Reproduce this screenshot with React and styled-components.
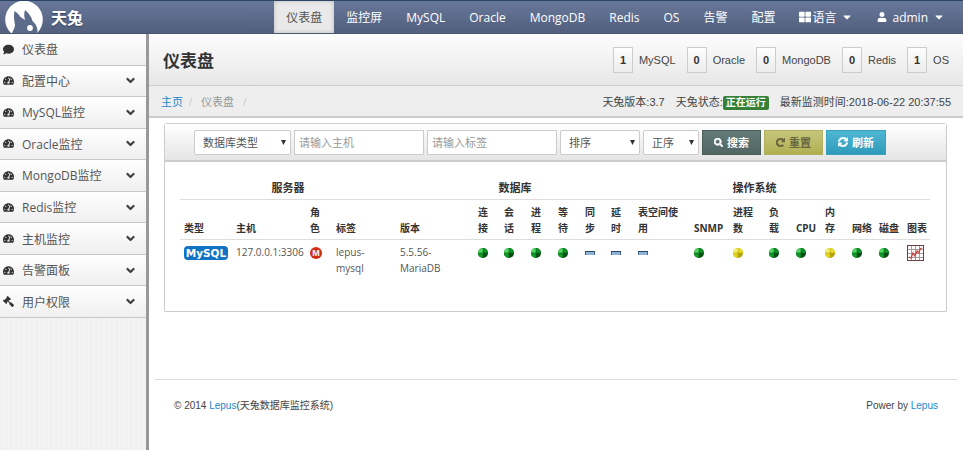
import React from "react";
import styled, {createGlobalStyle} from "styled-components";
import {FaComment, FaTachometerAlt, FaGavel, FaChevronDown, FaUser, FaThLarge, FaCaretDown, FaSearch, FaRedoAlt, FaSyncAlt} from "react-icons/fa";

const GlobalStyle = createGlobalStyle`
    * {
        box-sizing: border-box;
    }

    body {
        margin: 0;
        background: #fff;
        color: #444;
        font-family: "Open Sans", "Noto Sans CJK SC", sans-serif;
        font-size: 12px;
    }

    a {
        color: #1b88cb;
        text-decoration: none;
    }
`

const Page = styled.div`
    min-height: 100vh;
    display: flex;
    flex-direction: column;
`

const TopBar = styled.header`
    height: 34px;
    display: flex;
    justify-content: space-between;
    border-top: 1px solid #2b4664;
    border-bottom: 1px solid #4b5874;
    background: linear-gradient(#68779a, #525f7d);
`

const Brand = styled.a`
    display: flex;
    align-items: center;
    gap: 8px;
    padding-left: 5px;
    color: #fff;
    font-family: "Liberation Serif", "Noto Sans CJK SC", serif;
    font-size: 16px;
    font-weight: bold;
    text-shadow: 0 1px 1px #333e55;
`

const TopNav = styled.nav`
    display: flex;
    padding-right: 6px;
`

const NavLink = styled.a`
    display: flex;
    align-items: center;
    padding: 0 12px;
    color: ${props => props.$active ? "#555" : "#fff"};
    background: ${props => props.$active ? "#e9e9e9" : "none"};
    box-shadow: ${props => props.$active ? "inset 0 0 4px #bbb" : "none"};
`

const NavButton = styled.button`
    display: flex;
    align-items: center;
    gap: ${props => props.$gap}px;
    padding: 0 12px;
    border: 0;
    background: none;
    color: #fff;
    font: inherit;

    .caret {
        margin-left: 4px;
    }
`

const Body = styled.div`
    flex: 1;
    display: flex;
`

const Sidebar = styled.aside`
    width: 149px;
    flex-shrink: 0;
    border-right: 3px solid #999;
    background: repeating-linear-gradient(90deg, #f1f1f1 0 3px, #f3f3f3 3px 5px);
`

const Menu = styled.ul`
    min-height: 284px;
    display: grid;
    grid-auto-rows: 1fr;
    margin: 0;
    padding: 0;
    list-style: none;
`

const MenuItem = styled.li`
    display: flex;
    border-bottom: 1px solid #c8c8c8;
    background: linear-gradient(#fff, #efefef);
`

const MenuLink = styled.a`
    flex: 1;
    display: flex;
    align-items: center;
    padding: 0 11px 0 3px;
    color: #555;

    svg {
        color: #333;
    }

    span {
        flex: 1;
        padding-left: 8px;
    }
`

const Gavel = styled(FaGavel)`
    transform: scaleX(-1);
`

const Main = styled.main`
    flex: 1;
    min-width: 0;
`

const Heading = styled.div`
    height: 52px;
    display: flex;
    align-items: center;
    justify-content: space-between;
    padding: 0 14px;
    border-bottom: 1px solid #ccc;
    background: linear-gradient(#fdfdfd, #e7e7e7);

    h1 {
        margin: 0;
        color: #333;
        font-size: 17px;
    }
`

const Stats = styled.div`
    display: flex;
    gap: 11px;
    font-family: "Liberation Sans", "Noto Sans CJK SC", sans-serif;
`

const Stat = styled.div`
    display: flex;
    align-items: center;
    gap: 6px;
    font-size: 11px;

    b {
        width: 20px;
        height: 26px;
        border: 1px solid #ccc;
        background: linear-gradient(#fdfdfd, #ececec);
        color: #333;
        line-height: 24px;
        text-align: center;
    }
`

const Crumbs = styled.div`
    height: 32px;
    display: flex;
    align-items: center;
    justify-content: space-between;
    padding: 0 12px;
    border-bottom: 2px solid #ccc;
    background: #eee;
    color: #999;
    font-family: "Liberation Sans", "Noto Sans CJK SC", sans-serif;
    font-size: 11px;

    i {
        padding: 0 6px;
        color: #ccc;
        font-style: normal;
    }
`

const Status = styled.div`
    display: flex;
    align-items: center;
    gap: 11px;
    color: #444;

    b {
        padding: 0 3px;
        border-radius: 2px;
        background: #378137;
        color: #fff;
        font-size: 10px;
        line-height: 14px;
        display: inline-block;
    }
`

const Panel = styled.section`
    min-height: 189px;
    margin: 5px 16px 0 15px;
    border: 1px solid #ccc;
    border-radius: 3px 3px 0 0;
`

const Toolbar = styled.form`
    height: 38px;
    display: flex;
    align-items: center;
    gap: 3px;
    padding-left: 29px;
    border-bottom: 2px solid #ccc;
    background: linear-gradient(#fff, #e5e5e5);
`

const Field = styled.input`
    width: 130px;
    height: 25px;
    padding: 0 4px;
    border: 1px solid #ccc;
    background: #fff;
    font: inherit;
    font-size: 11px;

    &::placeholder {
        color: #999;
    }
`

const Picker = styled.div`
    width: ${props => props.$width}px;
    height: 25px;
    display: grid;
    align-items: center;

    select, svg {
        grid-area: 1 / 1;
    }

    select {
        appearance: none;
        width: 100%;
        height: 25px;
        padding: 0 8px;
        border: 1px solid #ccc;
        border-radius: 2px;
        background: #fff;
        color: #555;
        font: inherit;
        font-size: 11px;
    }

    svg {
        justify-self: end;
        margin-right: 5px;
        pointer-events: none;
    }
`

const tones = {
    dark: "background: linear-gradient(#637b78, #526664); border-color: #4d5f5d; color: #fff;",
    olive: "background: linear-gradient(#c6c67c, #b0b052); border-color: #b0b060; color: #666540;",
    blue: "background: linear-gradient(#4fb7d4, #2f9bba); border-color: #39a3c0; color: #fff;",
}

const Button = styled.button`
    height: 25px;
    display: flex;
    align-items: center;
    gap: 4px;
    padding: 0 11px;
    border: 1px solid;
    font: inherit;
    font-size: 11px;
    font-weight: bold;
    ${props => tones[props.$tone]}
`

const Table = styled.table`
    width: calc(100% - 31px);
    margin: 17px 16px 0 15px;
    table-layout: fixed;
    border-collapse: collapse;
    font-size: 10px;
    line-height: 16px;

    th, td {
        padding: 4px 0 3px 4px;
        text-align: left;
        vertical-align: bottom;
        white-space: pre;
    }

    th {
        border-bottom: 1px solid #ddd;
        color: #333;
    }

    td {
        vertical-align: top;
        color: #555;
    }

    td svg {
        display: block;
    }

    th[colspan] {
        padding: 0 0 3px;
        font-size: 11px;
        line-height: 17px;
        text-align: center;
    }
`

const Col = styled.col`
    width: ${props => props.$width / 7.5}%;
`

const IconBox = styled.span`
    height: 17px;
    display: flex;
    align-items: center;
`

const Footer = styled.footer`
    display: flex;
    justify-content: space-between;
    margin: 67px 6px 0;
    padding: 18px 19px;
    border-top: 1px solid #ddd;
    font-family: "Liberation Sans", "Noto Sans CJK SC", sans-serif;
    font-size: 10px;
    line-height: 16px;
`

const links = ["仪表盘", "监控屏", "MySQL", "Oracle", "MongoDB", "Redis", "OS", "告警", "配置"]

const menu = [
    {label: "仪表盘", icon: FaComment, leaf: true},
    {label: "配置中心", icon: FaTachometerAlt},
    {label: "MySQL监控", icon: FaTachometerAlt},
    {label: "Oracle监控", icon: FaTachometerAlt},
    {label: "MongoDB监控", icon: FaTachometerAlt},
    {label: "Redis监控", icon: FaTachometerAlt},
    {label: "主机监控", icon: FaTachometerAlt},
    {label: "告警面板", icon: FaTachometerAlt},
    {label: "用户权限", icon: Gavel},
]

const stats = [["1", "MySQL"], ["0", "Oracle"], ["0", "MongoDB"], ["0", "Redis"], ["1", "OS"]]

const columns = [
    {title: "类型", width: 52, cell: <MySqlBadge />},
    {title: "主机", width: 74, cell: "127.0.0.1:3306"},
    {title: "角\n色", width: 26, cell: <RoleBadge />},
    {title: "标签", width: 64, cell: "lepus-\nmysql"},
    {title: "版本", width: 78, cell: "5.5.56-\nMariaDB"},
    {title: "连\n接", width: 26, cell: <Ball />},
    {title: "会\n话", width: 27, cell: <Ball />},
    {title: "进\n程", width: 27, cell: <Ball />},
    {title: "等\n待", width: 27, cell: <Ball />},
    {title: "同\n步", width: 26, cell: <Dash />},
    {title: "延\n时", width: 27, cell: <Dash />},
    {title: "表空间使\n用", width: 56, cell: <Dash />},
    {title: "SNMP", width: 39, cell: <Ball />},
    {title: "进程\n数", width: 36, cell: <Ball warn />},
    {title: "负\n载", width: 27, cell: <Ball />},
    {title: "CPU", width: 29, cell: <Ball />},
    {title: "内\n存", width: 27, cell: <Ball warn />},
    {title: "网络", width: 27, cell: <Ball />},
    {title: "磁盘", width: 28, cell: <Ball />},
    {title: "图表", width: 27, cell: <ChartIcon />},
]

function Logo() {
    return (
        <svg width="38" height="32" viewBox="0 0 38 32">
            <circle cx="19" cy="18.5" r="18.8" fill="#fff" />
            <path d="M7 32C8 29 10 27 10 24C9 19 8.500 14 9.500 10C12 11.500 14 13.500 15.500 16L20 19C19 15 19 12 20 9C24 12 26.500 16 27.500 20C31 23 33 27 32.500 32Z" fill="#5d6b8b" />
            <circle cx="25" cy="27" r="2.900" fill="#fff" />
        </svg>
    )
}

function MySqlBadge() {
    return (
        <svg width="44" height="14" viewBox="0 0 44 14">
            <rect width="44" height="14" rx="4" fill="#1273c4" />
            <text x="22" y="11" textAnchor="middle" fill="#fff" fontFamily="DejaVu Sans" fontWeight="bold" fontSize="10.5">MySQL</text>
        </svg>
    )
}

function RoleBadge() {
    return (
        <svg width="12" height="12" viewBox="0 0 12 12">
            <circle cx="6" cy="6" r="6" fill="#d42c12" />
            <text x="6" y="9" textAnchor="middle" fill="#fff" fontFamily="Liberation Sans" fontWeight="bold" fontSize="9">M</text>
        </svg>
    )
}

function Ball({warn}) {
    return (
        <svg width="10" height="10" viewBox="0 0 10 10">
            <circle cx="5" cy="5" r="5" fill={warn ? "#b5a20c" : "#084d16"} />
            <path d="M5 5V0A5 5 0 0 0 0 5Z" fill={warn ? "#f5ef6a" : "#4fd860"} />
            <path d="M5 5H0A5 5 0 0 0 5 10Z" fill={warn ? "#e3d520" : "#0f9a28"} />
            <path d="M5 5V0A5 5 0 0 1 10 5Z" fill={warn ? "#e8dc28" : "#109028"} />
            <path d="M5 0V10M0 5H10" stroke={warn ? "#b3a410" : "#0b5e1a"} strokeWidth=".6" />
        </svg>
    )
}

function Dash() {
    return (
        <svg width="10" height="4" viewBox="0 0 10 4">
            <rect width="10" height="4" fill="#8db4d8" />
            <rect width="10" height="1" fill="#2c4560" />
            <rect y="1" width="1" height="3" fill="#46698c" />
            <rect x="9" y="1" width="1" height="3" fill="#46698c" />
        </svg>
    )
}

function ChartIcon() {
    return (
        <svg width="17" height="16" viewBox="0 0 17 16">
            <rect x=".5" y=".5" width="16" height="15" fill="#fff" stroke="#6b4040" />
            <path d="M4.500 1V15M8.500 1V15M12.500 1V15M1 4.500H16M1 8.500H16M1 12.500H16" stroke="#a89a9a" />
            <path d="M2 12L4 13L6 8L8 11L10 6L12 8L13 4L15 3" fill="none" stroke="#c24a44" strokeWidth="1.3" />
        </svg>
    )
}

function Select({label, width}) {
    return (
        <Picker $width={width}>
            <select aria-label={label}>
                <option>{label}</option>
            </select>
            <svg width="5" height="5" viewBox="0 0 5 5">
                <path d="M0 0H5L2.500 5Z" fill="#333" />
            </svg>
        </Picker>
    )
}

export default function App() {

    return (
        <Page>
            <GlobalStyle />

            <TopBar>
                <Brand href="#"><Logo />天兔</Brand>

                <TopNav>
                    {links.map((link, i) => (
                        <NavLink key={link} href="#" $active={i === 0}>{link}</NavLink>
                    ))}
                    <NavButton $gap={1}><FaThLarge />语言<FaCaretDown className="caret" /></NavButton>
                    <NavButton $gap={5}><FaUser size={10} />admin<FaCaretDown /></NavButton>
                </TopNav>
            </TopBar>

            <Body>
                <Sidebar>
                    <Menu>
                        {menu.map(({label, icon: Icon, leaf}) => (
                            <MenuItem key={label}>
                                <MenuLink href="#">
                                    <Icon size={11} />
                                    <span>{label}</span>
                                    {!leaf && <FaChevronDown size={9} strokeWidth={50} />}
                                </MenuLink>
                            </MenuItem>
                        ))}
                    </Menu>
                </Sidebar>

                <Main>
                    <Heading>
                        <h1>仪表盘</h1>
                        <Stats>
                            {stats.map(([count, name]) => (
                                <Stat key={name}><b>{count}</b>{name}</Stat>
                            ))}
                        </Stats>
                    </Heading>

                    <Crumbs>
                        <div><a href="#">主页</a><i>/</i> 仪表盘 <i>/</i></div>
                        <Status>
                            <span>天兔版本:3.7</span>
                            <span>天兔状态:<b>正在运行</b></span>
                            <span>最新监测时间:2018-06-22 20:37:55</span>
                        </Status>
                    </Crumbs>

                    <Panel>
                        <Toolbar>
                            <Select label="数据库类型" width={97} />
                            <Field aria-label="主机" placeholder="请输入主机" />
                            <Field aria-label="标签" placeholder="请输入标签" />
                            <Select label="排序" width={80} />
                            <Select label="正序" width={56} />
                            <Button type="button" $tone="dark"><FaSearch size={9} strokeWidth={40} />搜索</Button>
                            <Button type="reset" $tone="olive"><FaRedoAlt size={9} strokeWidth={50} />重置</Button>
                            <Button type="button" $tone="blue"><FaSyncAlt size={10} strokeWidth={30} />刷新</Button>
                        </Toolbar>

                        <Table>
                            <colgroup>
                                {columns.map(({title, width}) => <Col key={title} $width={width} />)}
                            </colgroup>
                            <thead>
                                <tr>
                                    <th colSpan={4}>服务器</th>
                                    <th colSpan={7}>数据库</th>
                                    <th colSpan={7}>操作系统</th>
                                    <th colSpan={2}></th>
                                </tr>
                                <tr>
                                    {columns.map(({title}) => <th key={title}>{title}</th>)}
                                </tr>
                            </thead>
                            <tbody>
                                <tr>
                                    {columns.map(({title, cell}) => (
                                        <td key={title}>{typeof cell === "string" ? cell : <IconBox>{cell}</IconBox>}</td>
                                    ))}
                                </tr>
                            </tbody>
                        </Table>
                    </Panel>

                    <Footer>
                        <span>© 2014 <a href="#">Lepus</a>(天兔数据库监控系统)</span>
                        <span>Power by <a href="#">Lepus</a></span>
                    </Footer>
                </Main>
            </Body>
        </Page>
    )
}
